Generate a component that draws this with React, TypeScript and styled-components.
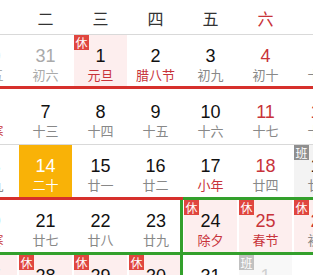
import React from 'react';
import styled, { createGlobalStyle } from 'styled-components';

const GlobalStyle = createGlobalStyle`
  html, body {
    margin: 0;
    padding: 0;
    background: #fff;
    overflow: hidden;
  }
`;

const RED = '#d6302c';
const GREEN = '#33a02c';
const GRAY_LINE = '#d9d9d9';

type Day = {
  n: number;
  lunar: string;
  other?: boolean;
  today?: boolean;
  rest?: boolean;
  work?: boolean;
  weekend?: boolean;
  festival?: boolean;
  edgeRight?: boolean;
};

type Week = {
  height: number;
  sep?: { size: number; colors: string[] };
  days: Day[];
};

const weekdays = ['一', '二', '三', '四', '五', '六', '日'];

const weeks: Week[] = [
  {
    height: 51,
    sep: { size: 3, colors: Array(7).fill(RED) },
    days: [
      { n: 30, lunar: '初五', other: true },
      { n: 31, lunar: '初六', other: true },
      { n: 1, lunar: '元旦', rest: true, festival: true },
      { n: 2, lunar: '腊八节', festival: true },
      { n: 3, lunar: '初九' },
      { n: 4, lunar: '初十', weekend: true },
      { n: 5, lunar: '十一', weekend: true },
    ],
  },
  {
    height: 55,
    sep: { size: 1, colors: Array(7).fill(GRAY_LINE) },
    days: [
      { n: 6, lunar: '小寒', festival: true },
      { n: 7, lunar: '十三' },
      { n: 8, lunar: '十四' },
      { n: 9, lunar: '十五' },
      { n: 10, lunar: '十六' },
      { n: 11, lunar: '十七', weekend: true },
      { n: 12, lunar: '十八', weekend: true },
    ],
  },
  {
    height: 52,
    sep: { size: 3, colors: [RED, RED, RED, RED, GREEN, GREEN, GREEN] },
    days: [
      { n: 13, lunar: '十九' },
      { n: 14, lunar: '二十', today: true },
      { n: 15, lunar: '廿一' },
      { n: 16, lunar: '廿二' },
      { n: 17, lunar: '小年', festival: true },
      { n: 18, lunar: '廿四', weekend: true },
      { n: 19, lunar: '廿五', work: true },
    ],
  },
  {
    height: 52,
    sep: { size: 3, colors: Array(7).fill(GREEN) },
    days: [
      { n: 20, lunar: '大寒', festival: true },
      { n: 21, lunar: '廿七' },
      { n: 22, lunar: '廿八' },
      { n: 23, lunar: '廿九', edgeRight: true },
      { n: 24, lunar: '除夕', rest: true, festival: true },
      { n: 25, lunar: '春节', rest: true, festival: true, weekend: true },
      { n: 26, lunar: '初二', rest: true, weekend: true },
    ],
  },
  {
    height: 52,
    days: [
      { n: 27, lunar: '初三', rest: true },
      { n: 28, lunar: '初四', rest: true },
      { n: 29, lunar: '初五', rest: true },
      { n: 30, lunar: '初六', rest: true, edgeRight: true },
      { n: 31, lunar: '初七' },
      { n: 1, lunar: '初八', other: true, work: true },
      { n: 2, lunar: '初九', other: true, weekend: true },
    ],
  },
];

const Calendar = styled.div`
  margin-left: -37px;
  width: 385px;
  font-family: "Liberation Sans", "Noto Sans CJK SC", sans-serif;
`;

const WeekHeader = styled.div`
  display: grid;
  grid-template-columns: repeat(7, 55px);
  height: 34px;
  border-bottom: 1px solid ${GRAY_LINE};
  align-items: center;
`;

const WeekdayLabel = styled.div<{ $weekend: boolean }>`
  text-align: center;
  font-family: "Noto Sans CJK SC", sans-serif;
  font-size: 16px;
  padding-top: 2px;
  color: ${(p) => (p.$weekend ? '#c8333a' : '#333')};
`;

const WeekRow = styled.div<{ $height: number }>`
  display: grid;
  grid-template-columns: repeat(7, 55px);
  height: ${(p) => p.$height}px;
`;

const Separator = styled.div<{ $size: number }>`
  display: grid;
  grid-template-columns: repeat(7, 55px);
  height: ${(p) => p.$size}px;
`;

const Segment = styled.div<{ $color: string }>`
  background: ${(p) => p.$color};
`;

const cellBg = (d: Day) => {
  if (d.today) return '#f9b207';
  if (d.rest) return '#fdeeee';
  if (d.work) return '#f3f3f3';
  return '#fff';
};

const Cell = styled.div<{ $bg: string; $edgeRight: boolean; $faded: boolean }>`
  position: relative;
  margin: 0 ${(p) => (p.$edgeRight ? '0' : '1px')} 0 1px;
  background: ${(p) => p.$bg};
  box-shadow: ${(p) => (p.$edgeRight ? `inset -3px 0 0 ${GREEN}` : 'none')};
  display: flex;
  flex-direction: column;
  align-items: center;
  justify-content: center;
  padding-top: 7px;
  box-sizing: border-box;
  opacity: ${(p) => (p.$faded ? 0.55 : 1)};
`;

const DayNumber = styled.div<{ $color: string }>`
  font-size: 18px;
  line-height: 20px;
  color: ${(p) => p.$color};
`;

const Lunar = styled.div<{ $color: string }>`
  font-family: "Noto Sans CJK SC", sans-serif;
  font-size: 13px;
  line-height: 17px;
  color: ${(p) => p.$color};
`;

const Badge = styled.span<{ $work: boolean }>`
  position: absolute;
  top: 0;
  left: 0;
  width: 15px;
  height: 15px;
  font-family: "Noto Sans CJK SC", sans-serif;
  font-size: 12px;
  line-height: 15px;
  text-align: center;
  color: #fff;
  background: ${(p) => (p.$work ? '#8f8f8f' : '#e0463f')};
`;

const numberColor = (d: Day) => {
  if (d.today) return '#fff';
  if (d.other) return '#aaa';
  if (d.weekend) return '#c8333a';
  return '#111';
};

const lunarColor = (d: Day) => {
  if (d.today) return '#fff';
  if (d.other) return '#aaa';
  if (d.festival) return '#c8333a';
  return '#888';
};

const DayCell = ({ d }: { d: Day }) => (
  <Cell $bg={cellBg(d)} $edgeRight={!!d.edgeRight} $faded={!!d.other && !!d.work}>
    {d.rest && <Badge $work={false}>休</Badge>}
    {d.work && <Badge $work>班</Badge>}
    <DayNumber $color={numberColor(d)}>{d.n}</DayNumber>
    <Lunar $color={lunarColor(d)}>{d.lunar}</Lunar>
  </Cell>
);

export default function App() {
  return (
    <>
      <GlobalStyle />
      <Calendar>
        <WeekHeader>
          {weekdays.map((w, i) => (
            <WeekdayLabel key={w} $weekend={i >= 5}>
              {w}
            </WeekdayLabel>
          ))}
        </WeekHeader>
        {weeks.map((wk, i) => (
          <React.Fragment key={i}>
            <WeekRow $height={wk.height}>
              {wk.days.map((d, j) => (
                <DayCell key={j} d={d} />
              ))}
            </WeekRow>
            {wk.sep && (
              <Separator $size={wk.sep.size}>
                {wk.sep.colors.map((c, j) => (
                  <Segment key={j} $color={c} />
                ))}
              </Separator>
            )}
          </React.Fragment>
        ))}
      </Calendar>
    </>
  );
}
